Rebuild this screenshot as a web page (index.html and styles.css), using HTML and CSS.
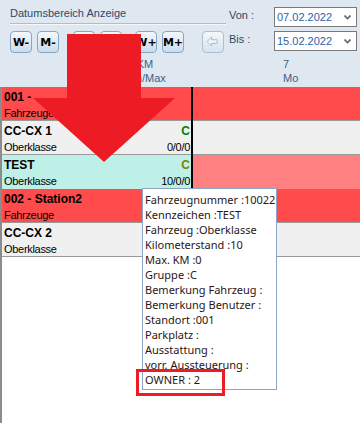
FILE: index.html
```html
<!DOCTYPE html>
<html lang="de">
<head>
    <meta charset="UTF-8">
    <title>Disposition</title>
    <link rel="stylesheet" href="styles.css">
</head>
<body>
    <div class="screen">
        <!-- Datumsbereich -->
        <div class="toolbar">
            <div class="toolbar-top">
                <div class="range">
                    <div class="range-title">Datumsbereich Anzeige</div>
                    <div class="nav">
                        <div class="btn-group">
                            <button class="nav-btn">W-</button>
                            <button class="nav-btn">M-</button>
                        </div>
                        <div class="btn-group group-mid">
                            <button class="nav-btn">T-</button>
                            <button class="nav-btn">T+</button>
                        </div>
                        <div class="btn-group group-plus">
                            <button class="nav-btn">W+</button>
                            <button class="nav-btn">M+</button>
                        </div>
                        <button class="nav-btn back-btn" disabled>
                            <svg width="22" height="22" viewBox="0 0 22 22">
                                <path d="M4.5 10.5 L9.5 5.5 L9.5 8.5 L15.5 8.5 L15.5 12.5 L9.5 12.5 L9.5 15.5 Z" fill="#f3f6f9" stroke="#a9b3bd" stroke-width="1"/>
                            </svg>
                        </button>
                    </div>
                </div>
                <div class="dates">
                    <span class="date-label">Von :</span>
                    <div class="date-box">
                        <span>07.02.2022</span>
                        <svg class="chevron" width="7" height="5" viewBox="0 0 7 5"><path d="M0.5 0.5 L3.5 3.5 L6.5 0.5" fill="none" stroke="#666" stroke-width="1.6"/></svg>
                    </div>
                    <span class="date-label">Bis :</span>
                    <div class="date-box">
                        <span>15.02.2022</span>
                        <svg class="chevron" width="7" height="5" viewBox="0 0 7 5"><path d="M0.5 0.5 L3.5 3.5 L6.5 0.5" fill="none" stroke="#666" stroke-width="1.6"/></svg>
                    </div>
                </div>
            </div>
            <div class="col-heads">
                <div class="col-km">KM<br>Min/Max</div>
                <div class="col-day">7<br>Mo</div>
            </div>
        </div>

        <!-- Fahrzeugliste -->
        <div class="grid">
            <div class="row row-station">
                <div class="cell-main">
                    <div class="line-top"><span>001 -</span></div>
                    <div class="line-sub"><span>Fahrzeuge</span></div>
                </div>
                <div class="cell-plan"></div>
            </div>
            <div class="row row-car">
                <div class="cell-main">
                    <div class="line-top"><span>CC-CX 1</span><span class="group-ok">C</span></div>
                    <div class="line-sub"><span>Oberklasse</span><span>0/0/0</span></div>
                </div>
                <div class="cell-plan"></div>
            </div>
            <div class="row row-selected">
                <div class="cell-main">
                    <div class="line-top"><span>TEST</span><span class="group-warn">C</span></div>
                    <div class="line-sub"><span>Oberklasse</span><span>10/0/0</span></div>
                </div>
                <div class="cell-plan"></div>
            </div>
            <div class="row row-station">
                <div class="cell-main">
                    <div class="line-top"><span>002 - Station2</span></div>
                    <div class="line-sub"><span>Fahrzeuge</span></div>
                </div>
                <div class="cell-plan"></div>
            </div>
            <div class="row row-car">
                <div class="cell-main">
                    <div class="line-top"><span>CC-CX 2</span></div>
                    <div class="line-sub"><span>Oberklasse</span></div>
                </div>
                <div class="cell-plan"></div>
            </div>
        </div>

        <!-- Tooltip -->
        <div class="tooltip">
            <div>Fahrzeugnummer :10022</div>
            <div>Kennzeichen :TEST</div>
            <div>Fahrzeug :Oberklasse</div>
            <div>Kilometerstand :10</div>
            <div>Max. KM :0</div>
            <div>Gruppe :C</div>
            <div>Bemerkung Fahrzeug :</div>
            <div>Bemerkung Benutzer :</div>
            <div>Standort :001</div>
            <div>Parkplatz :</div>
            <div>Ausstattung :</div>
            <div>vorr. Aussteuerung :</div>
            <div>OWNER : 2</div>
        </div>

        <!-- Markierungen -->
        <svg class="marks" width="360" height="423" viewBox="0 0 360 423">
            <polygon points="67,34 141,34 141,98 175,98 104,162 33,98 67,98" fill="#ed1c24"/>
            <rect x="137.5" y="370.5" width="86" height="24" fill="none" stroke="#ed1c24" stroke-width="3"/>
        </svg>
    </div>
</body>
</html>
```

FILE: styles.css
```css
/* Page */
body {
    margin: 0;
    font-family: "Liberation Sans", Arial, sans-serif;
    font-size: 11px;
    color: #000;
}

.screen {
    position: relative;
    width: 360px;
    height: 423px;
    overflow: hidden;
    background: #fff;
}

/* Toolbar */
.toolbar {
    height: 87px;
    box-sizing: border-box;
    background: #dfe8f1;
}

.toolbar-top {
    display: flex;
    padding: 7px 0 0 10px;
}

.range {
    width: 216px;
}

.range-title {
    line-height: 13px;
    padding-bottom: 3px;
    border-bottom: 1px solid #a9bfd5;
    box-shadow: 0 1px 0 #f4f8fb;
    color: #2d4a6c;
}

.nav {
    display: flex;
    margin-top: 7px;
}

.btn-group {
    display: flex;
    gap: 5px;
}

.group-mid {
    margin-left: 14px;
}

.group-plus {
    margin-left: 13px;
}

.nav-btn {
    width: 22px;
    height: 22px;
    padding: 0;
    display: flex;
    align-items: center;
    justify-content: center;
    border: 1px solid #86a7c6;
    border-radius: 4px;
    background: linear-gradient(#f3f8fc, #cbdded);
    font-family: "DejaVu Sans", sans-serif;
    font-weight: bold;
    font-size: 11px;
    color: #000;
}

.back-btn {
    margin-left: 18px;
    border-color: #a9c0d6;
    background: linear-gradient(#f4f8fb, #d6e3ef);
}

.back-btn svg {
    display: block;
}

/* Von / Bis */
.dates {
    display: grid;
    grid-template-columns: 45px 83px;
    grid-auto-rows: 20px;
    row-gap: 4px;
    margin-left: 3px;
}

.date-label {
    line-height: 17px;
    color: #34485f;
}

.date-box {
    display: flex;
    align-items: center;
    justify-content: space-between;
    box-sizing: border-box;
    padding: 0 5px 0 2px;
    border: 1px solid #7a7a7a;
    background: #fff;
    color: #2b62a8;
}

.chevron {
    display: block;
}

/* Column headers */
.col-heads {
    display: flex;
    margin-top: 4px;
    padding-left: 120px;
    line-height: 14px;
    color: #3d5f87;
}

.col-km {
    width: 50px;
    text-align: center;
}

.col-day {
    margin-left: 113px;
}

/* Grid rows */
.grid {
    height: 336px;
    border-left: 2px solid #8c8c8c;
    background: #fff;
}

.row {
    display: grid;
    grid-template-columns: 189px 1fr;
    height: 34px;
    box-sizing: border-box;
    border-bottom: 1px solid #999;
}

.cell-main {
    padding: 2px 1px 0 2px;
}

.cell-plan {
    border-left: 2px solid #000;
}

.line-top {
    display: flex;
    justify-content: space-between;
    font-size: 12px;
    font-weight: bold;
    line-height: 16px;
}

.line-sub {
    display: flex;
    justify-content: space-between;
    line-height: 16px;
    letter-spacing: -0.3px;
}

.group-ok {
    color: #008000;
}

.group-warn {
    color: #808000;
}

.row-station {
    background: #ff4b4b;
}

.row-car {
    background: #f0f0f0;
}

.row-selected .cell-main {
    background: #bff0e8;
}

.row-selected .cell-plan {
    background: #ff8080;
}

/* Tooltip */
.tooltip {
    position: absolute;
    left: 142px;
    top: 188px;
    width: 135px;
    box-sizing: border-box;
    padding: 3px 2px 2px 2px;
    border: 1px solid #8ea6c6;
    background: #fff;
    font-family: "Noto Sans", sans-serif;
    font-size: 11px;
    line-height: 15px;
    color: #2a1616;
    white-space: nowrap;
}

/* Red annotations */
.marks {
    position: absolute;
    left: 0;
    top: 0;
    pointer-events: none;
}
```
